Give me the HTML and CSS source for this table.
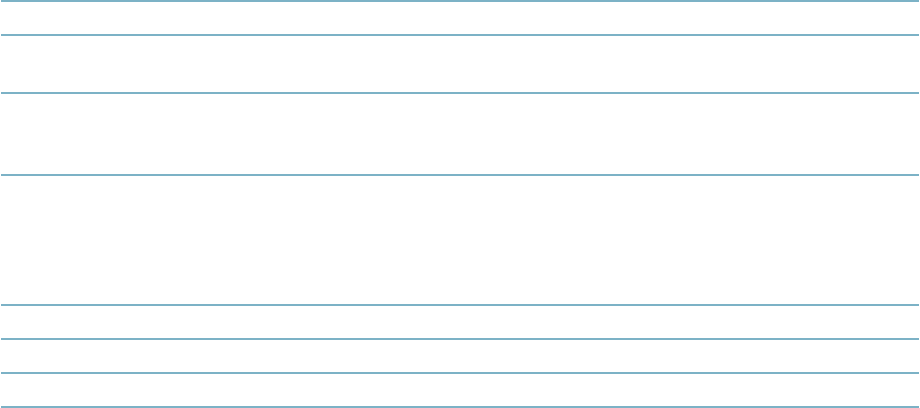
FILE: index.html
```html
<!DOCTYPE html>
<html>
<head>
<meta charset="utf-8">
<link rel="stylesheet" href="styles.css">
</head>
<body>
<div class="sheet">
  <div class="row first h32"></div>
  <div class="row h56"></div>
  <div class="row h80"></div>
  <div class="row h128"></div>
  <div class="row h32"></div>
  <div class="row h32"></div>
  <div class="row h32"></div>
</div>
</body>
</html>
```
FILE: styles.css
```css
html, body {
  margin: 0;
  padding: 0;
  background: #ffffff;
  font-family: "Liberation Sans", Arial, sans-serif;
}
.sheet {
  display: flex;
  flex-direction: column;
  padding: 0 1px;
  width: 918px;
}
.row {
  border-bottom: 2px solid #7cb2c6;
}
.row.first {
  border-top: 2px solid #7cb2c6;
}
.h32 { height: 32px; }
.h56 { height: 56px; }
.h80 { height: 80px; }
.h128 { height: 128px; }
```
